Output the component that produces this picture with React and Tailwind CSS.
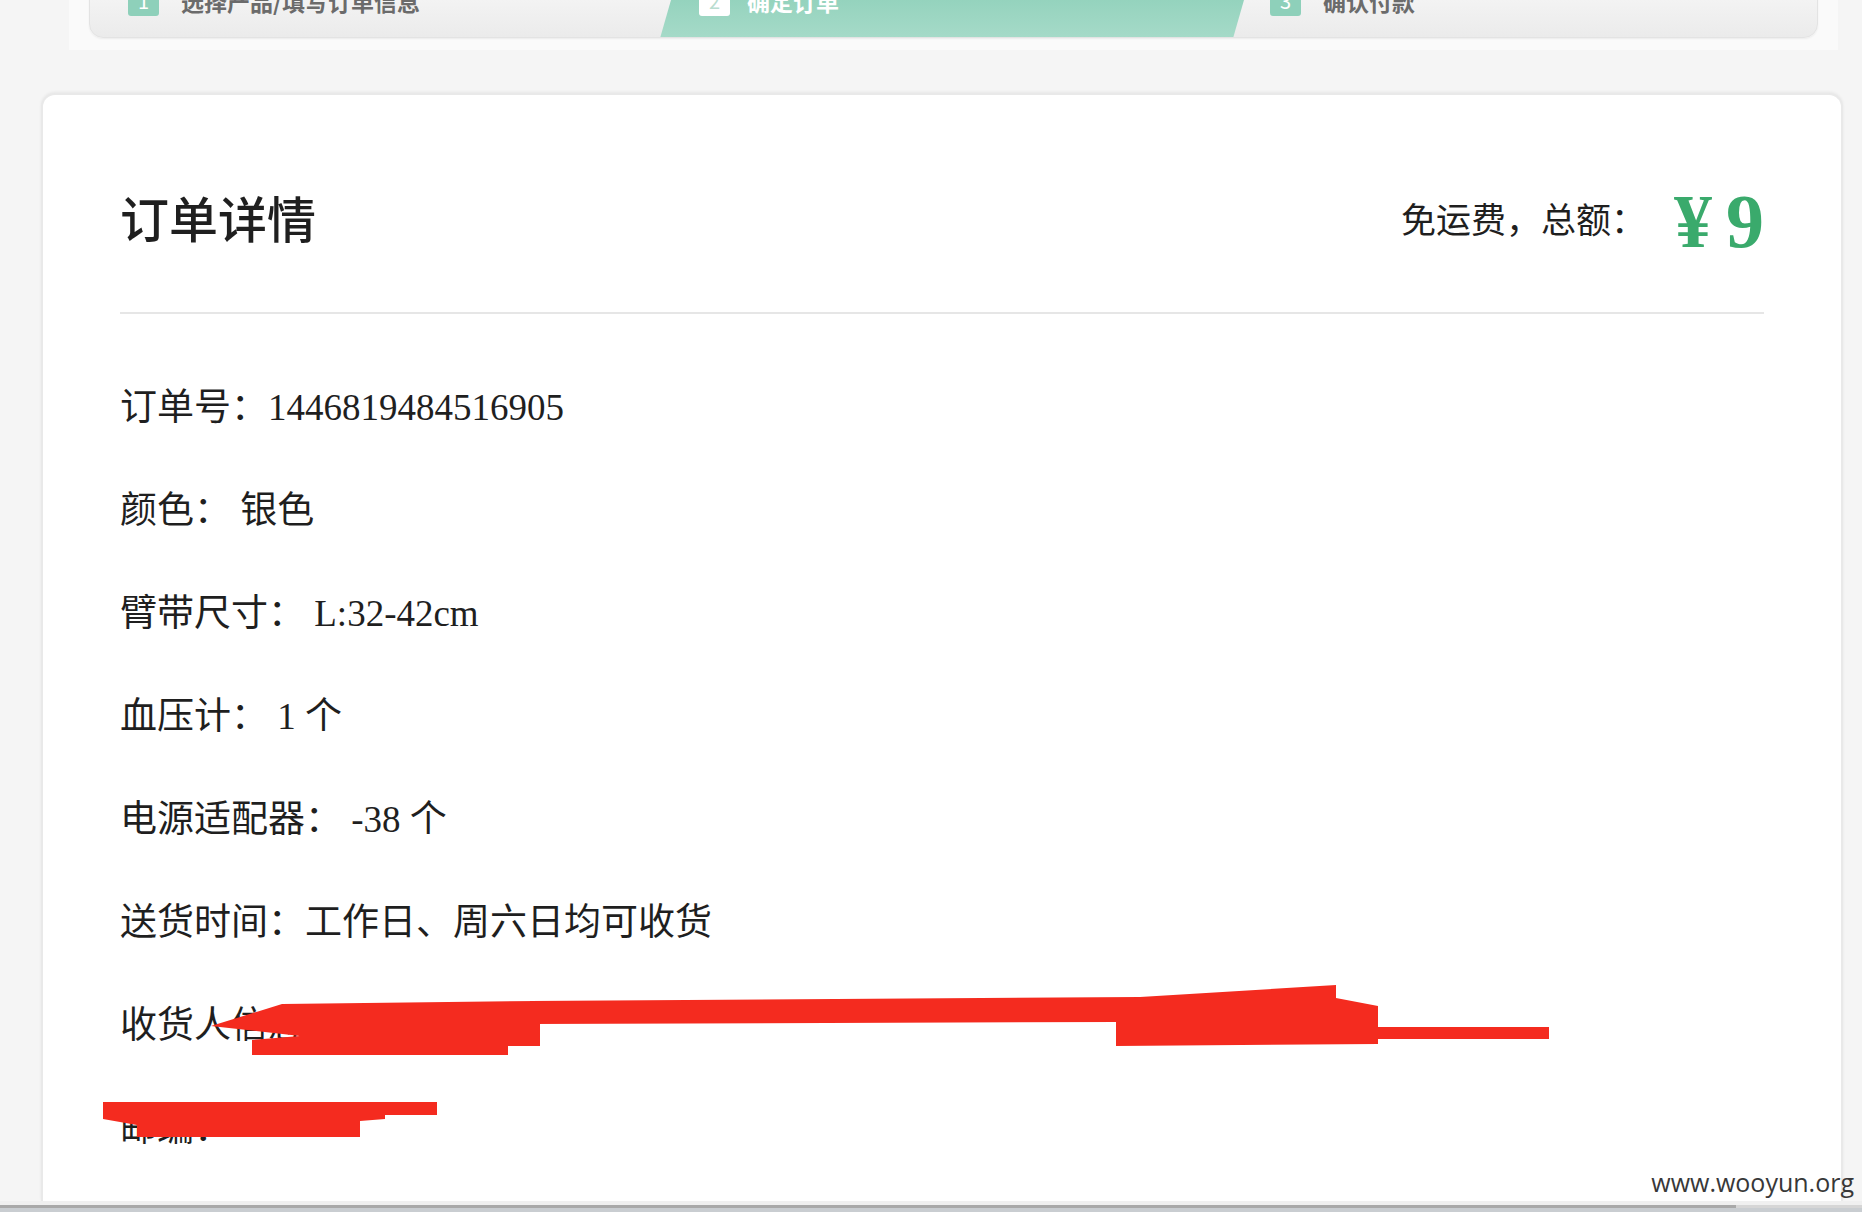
import React from 'react';

const rows = [
  { label: '订单号：', value: '1446819484516905' },
  { label: '颜色：', value: ' 银色' },
  { label: '臂带尺寸：', value: ' L:32-42cm' },
  { label: '血压计：', value: ' 1 个' },
  { label: '电源适配器：', value: ' -38 个' },
  { label: '送货时间：', value: '工作日、周六日均可收货' },
  { label: '收货人信息：', value: '' },
  { label: '邮编：', value: '' },
];

const steps = [
  { n: 1, text: '选择产品/填写订单信息' },
  { n: 2, text: '确定订单' },
  { n: 3, text: '确认付款' },
];

// red marker strokes over the consignee info
const Redaction = () => (
  <svg className="pointer-events-none absolute left-0 top-0" width="1862" height="1212" viewBox="0 0 1862 1212">
    <g fill="#f42b1f">
      <polygon points="211,1026 282,1004 540,1001 540,1046 508,1046 508,1055 252,1055 252,1040 300,1036" />
      <polygon points="530,1001 1140,997 1336,985 1336,998 1378,1006 1378,1044 1116,1046 1116,1022 530,1024" />
      <rect x="1366" y="1027" width="183" height="12" />
      <rect x="103" y="1102" width="334" height="13" />
      <polygon points="103,1113 385,1113 385,1119 360,1121 360,1137 137,1137 137,1125 103,1119" />
    </g>
  </svg>
);

const StepBar = () => (
  <div className="ml-[69px] mr-[24px] h-[50px] bg-[#fafafa] px-[20px]">
    <div className="mt-[-38px] flex h-[76px] overflow-hidden rounded-b-[14px] border border-[#e3e3e3] bg-gradient-to-b from-[#fbfbfb] to-[#ebebeb] shadow-[0_1px_2px_rgba(0,0,0,0.06)] font-['Noto_Sans_CJK_SC',sans-serif]">
      <div className="flex w-[581px] items-center gap-[22px] pl-[38px] pt-[2px]">
        <span className="flex h-[30px] w-[31px] items-center justify-center rounded-[3px] bg-[#8ed0ba] text-[20px] text-white">{steps[0].n}</span>
        <span className="text-[23px] font-semibold text-[#6b6b6b]">{steps[0].text}</span>
      </div>
      <div className="relative flex w-[573px] items-center gap-[17px] pl-[28px] pt-[2px]">
        <div className="absolute inset-0 -skew-x-16 bg-gradient-to-b from-[#84ccb3] to-[#a5dac8]" />
        <span className="relative flex h-[30px] w-[31px] items-center justify-center rounded-[3px] bg-white text-[20px] text-[#b9ddd0]">{steps[1].n}</span>
        <span className="relative text-[23px] font-semibold text-white">{steps[1].text}</span>
      </div>
      <div className="flex flex-1 items-center gap-[22px] pl-[26px] pt-[2px]">
        <span className="flex h-[30px] w-[31px] items-center justify-center rounded-[3px] bg-[#8ed0ba] text-[20px] text-white">{steps[2].n}</span>
        <span className="text-[23px] font-semibold text-[#6b6b6b]">{steps[2].text}</span>
      </div>
    </div>
  </div>
);

const App = () => {
  return (
    <div className="relative flex h-[1212px] w-[1862px] flex-col overflow-hidden bg-[#f5f5f5]">
      <StepBar />

      {/* Order card */}
      <div className="ml-[41px] mt-[43px] h-[1108px] w-[1802px] rounded-t-[14px] border-2 border-b-0 border-[#e9e9e9] bg-white px-[77px] pt-[76px] shadow-[0_-1px_3px_rgba(0,0,0,0.06)] font-['Liberation_Serif','Noto_Sans_CJK_SC',serif] text-[#1f1f1f]">
        <div className="flex h-[100px] items-center justify-between">
          <h1 className="text-[49px] font-medium leading-none">订单详情</h1>
          <div className="flex items-center">
            <span className="text-[35px] leading-none">免运费，总额：</span>
            <span className="ml-[28px] text-[76px] font-bold leading-none text-[#3aaa6c]">¥</span>
            <span className="ml-[14px] text-[76px] font-bold leading-none text-[#3aaa6c]">9</span>
          </div>
        </div>
        <div className="mt-[41px] h-[2px] bg-[#e6e6e6]" />

        <div className="mt-[42px] flex flex-col">
          {rows.map((r, i) => (
            <div key={i} className="h-[103px] whitespace-pre text-[37px] leading-[103px]">
              {r.label}{r.value}
            </div>
          ))}
        </div>
      </div>

      {/* horizontal scrollbar */}
      <div className="h-[4px] bg-[#f0f0f0]" />
      <div className="flex h-[3px]">
        <div className="w-[1736px] bg-[#a9a9a9]" />
        <div className="flex-1 bg-[#d6d6d6]" />
      </div>
      <div className="flex-1 bg-[#c9cdd1]" />

      <Redaction />

      <div className="pointer-events-none absolute bottom-[17px] right-[8px] font-['Open_Sans',sans-serif] text-[25px] leading-none text-[#383838]">
        www.wooyun.org
      </div>
    </div>
  );
};

export default App;
